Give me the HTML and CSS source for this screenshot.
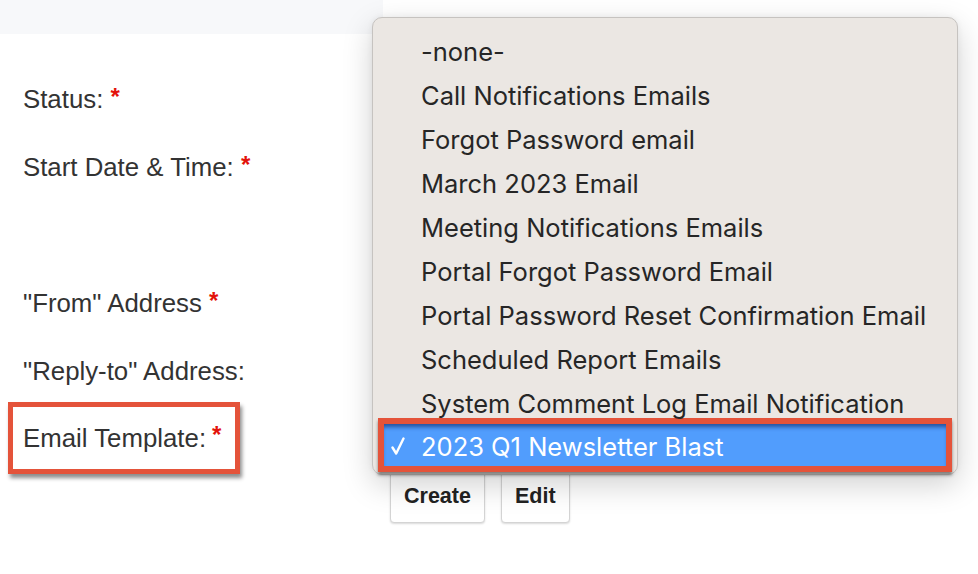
FILE: index.html
```html
<!DOCTYPE html>
<html>
<head>
<meta charset="utf-8">
<link rel="stylesheet" href="styles.css">
</head>
<body>
<div class="band"></div>
<div class="form">
  <div class="row"><span class="label">Status: <span class="req">*</span></span></div>
  <div class="row"><span class="label">Start Date &amp; Time: <span class="req">*</span></span></div>
  <div class="row"></div>
  <div class="row"><span class="label">"From" Address <span class="req">*</span></span></div>
  <div class="row"><span class="label">"Reply-to" Address:</span></div>
  <div class="row"><span class="label hl">Email Template: <span class="req">*</span></span></div>
  <div class="actions">
    <button class="btn">Create</button>
    <button class="btn">Edit</button>
  </div>
</div>
<div class="menu">
  <div class="item">-none-</div>
  <div class="item">Call Notifications Emails</div>
  <div class="item">Forgot Password email</div>
  <div class="item">March 2023 Email</div>
  <div class="item">Meeting Notifications Emails</div>
  <div class="item">Portal Forgot Password Email</div>
  <div class="item">Portal Password Reset Confirmation Email</div>
  <div class="item">Scheduled Report Emails</div>
  <div class="item">System Comment Log Email Notification</div>
  <div class="item selected"><svg class="check" width="14" height="20" viewBox="0 0 14 20"><path d="M1.5 11.5 L5.2 17.5 L12.5 2.5" fill="none" stroke="#ffffff" stroke-width="2.4" stroke-linecap="round" stroke-linejoin="round"/></svg>2023 Q1 Newsletter Blast</div>
</div>
</body>
</html>
```
FILE: styles.css
```css
html, body {
  margin: 0;
  padding: 0;
  background: #ffffff;
}
body {
  width: 978px;
  height: 574px;
  overflow: hidden;
  position: relative;
  font-family: "Liberation Sans", Arial, sans-serif;
}
.band {
  width: 383px;
  height: 34px;
  background: #f7f8fa;
}
.form {
  padding-top: 31px;
}
.row {
  height: 68px;
  display: flex;
  align-items: center;
  padding-left: 23px;
}
.label {
  font-size: 25.8px;
  color: #333333;
  white-space: nowrap;
}
.req {
  color: #e3120b;
  font-size: 24px;
  font-weight: bold;
  position: relative;
  top: -3px;
}
.label.hl {
  box-sizing: border-box;
  display: flex;
  align-items: center;
  width: 232px;
  height: 72px;
  margin-left: -15px;
  padding-left: 10px;
  margin-top: -2px;
  border: 5px solid #e4533a;
  box-shadow: 2px 4px 4px rgba(0, 0, 0, 0.45);
}
.label.hl .req {
  margin-left: 6px;
}
.actions {
  display: flex;
  gap: 16px;
  padding-left: 390px;
  margin-top: -4px;
}
.btn {
  height: 54px;
  padding: 0 13px;
  background: #ffffff;
  border: 1px solid #d4d4d4;
  border-radius: 4px;
  box-shadow: 0 1px 2px rgba(0, 0, 0, 0.15);
  font-family: "Liberation Sans", Arial, sans-serif;
  font-weight: bold;
  font-size: 21.5px;
  color: #222222;
}
.menu {
  position: absolute;
  left: 372px;
  top: 17px;
  width: 586px;
  box-sizing: border-box;
  padding: 12px 0 2px;
  background: #ebe7e3;
  border: 1px solid #c6c3c0;
  border-radius: 10px;
  box-shadow: 0 10px 30px rgba(0, 0, 0, 0.18), 0 0 6px rgba(0, 0, 0, 0.06);
  font-family: Inter, "Noto Sans", sans-serif;
}
.item {
  height: 44px;
  display: flex;
  align-items: center;
  padding-left: 48px;
  padding-bottom: 2px;
  box-sizing: border-box;
  font-size: 25.5px;
  color: #262626;
  white-space: nowrap;
}
.item.selected {
  height: 54px;
  margin: -8px 5px 0;
  padding: 2px 0 0 7px;
  border: 6px solid #e4533a;
  background: #519dfd;
  color: #ffffff;
  box-shadow: inset 0 5px 4px -2px rgba(0, 20, 80, 0.55), 0 3px 3px rgba(0, 0, 0, 0.45);
}
.check {
  display: block;
  margin-right: 16px;
}
```
